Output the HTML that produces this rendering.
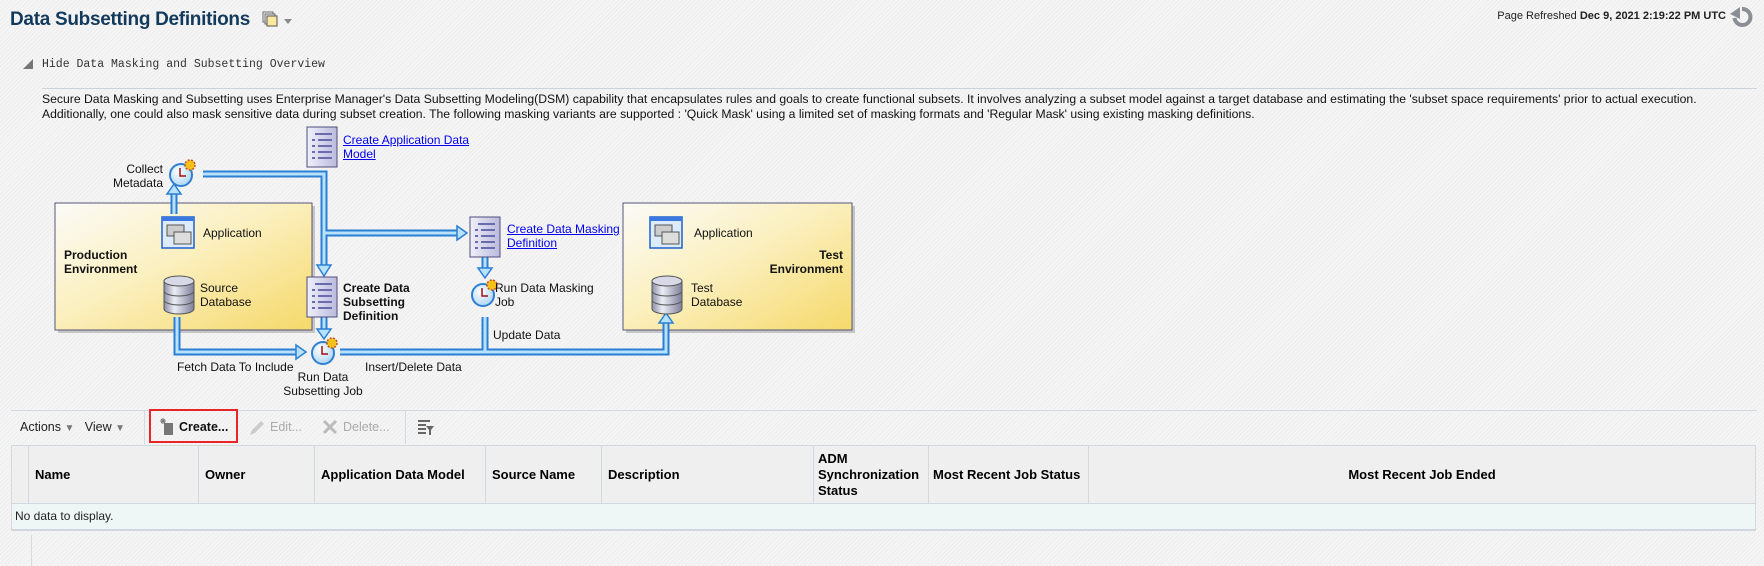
<!DOCTYPE html>
<html><head><meta charset="utf-8">
<style>
*{margin:0;padding:0;box-sizing:border-box}
html,body{width:1764px;height:566px;overflow:hidden}
body{font-family:"Liberation Sans",Arial,sans-serif;color:#000;position:relative;
background:#f3f3f3 repeating-linear-gradient(135deg,#f5f5f5 0 2px,#ededed 2px 3px);}
.a{position:absolute;white-space:nowrap}
.lbl{font-size:12px;line-height:14px;color:#111}
.lnk{color:#0000ee;text-decoration:underline}
.b{font-weight:bold}
th{font-weight:bold;font-size:13px;text-align:left;padding:0 6px;border-right:1px solid #d3d9e0;vertical-align:middle;line-height:16px}
</style></head><body>
<div class="a" style="left:10px;top:9px;font-size:19px;letter-spacing:-0.3px;font-weight:bold;color:#123a5c">Data Subsetting Definitions</div>
<svg class="a" style="left:262px;top:11px" width="34" height="18">
<rect x="1" y="1" width="10" height="10" fill="#fff" stroke="#666"/><rect x="3" y="3" width="10" height="10" fill="#eee" stroke="#666"/><rect x="5" y="5" width="10" height="10" fill="#fbe9a0" stroke="#555"/>
<polygon points="22,8 30,8 26,13" fill="#888"/></svg>
<div class="a" style="right:38px;top:10px;font-size:11px;color:#222">Page Refreshed <b>Dec 9, 2021 2:19:22 PM UTC</b></div>
<svg class="a" style="left:1729px;top:4px" width="26" height="24"><path d="M13 5 A8 8 0 1 1 5.5 14" fill="none" stroke="#8a8f96" stroke-width="4"/><polygon points="1,10 11,3 11,15" fill="#8a8f96"/></svg>

<svg class="a" style="left:22px;top:58px" width="12" height="12"><polygon points="1,11 11,1 11,11" fill="#777"/></svg>
<div class="a" style="left:42px;top:58px;font-family:'Liberation Mono',monospace;font-size:11.5px;color:#333">Hide Data Masking and Subsetting Overview</div>
<div class="a" style="left:42px;top:88px;width:1715px;height:1px;background:#ccd3db"></div>
<div class="a" style="left:42px;top:92px;font-size:12.2px;line-height:15px;color:#111">Secure Data Masking and Subsetting uses Enterprise Manager's Data Subsetting Modeling(DSM) capability that encapsulates rules and goals to create functional subsets. It involves analyzing a subset model against a target database and estimating the 'subset space requirements' prior to actual execution.<br>Additionally, one could also mask sensitive data during subset creation. The following masking variants are supported : 'Quick Mask' using a limited set of masking formats and 'Regular Mask' using existing masking definitions.</div>

<svg class="a" style="left:0;top:0" width="1764" height="410">
<defs>
<linearGradient id="env" x1="0" y1="0" x2="1" y2="1"><stop offset="0" stop-color="#fbfbf8"/><stop offset="0.45" stop-color="#fbf0c0"/><stop offset="1" stop-color="#f5d96a"/></linearGradient>
<linearGradient id="doc" x1="0" y1="0" x2="1" y2="0"><stop offset="0" stop-color="#f0f0fa"/><stop offset="1" stop-color="#b9b9dc"/></linearGradient>
<linearGradient id="db" x1="0" y1="0" x2="1" y2="0"><stop offset="0" stop-color="#8b8ea8"/><stop offset="0.35" stop-color="#eceef6"/><stop offset="1" stop-color="#7c7f98"/></linearGradient>
<radialGradient id="clk" cx="0.4" cy="0.35" r="0.7"><stop offset="0" stop-color="#fff"/><stop offset="1" stop-color="#a9d4f3"/></radialGradient>
<g id="doci"><rect x="0" y="0" width="30" height="40" fill="url(#doc)" stroke="#4d4d80"/>
<g stroke="#6b6bb0" stroke-width="2"><line x1="8" y1="7" x2="25" y2="7"/><line x1="5" y1="13" x2="8" y2="13"/><line x1="11" y1="13" x2="25" y2="13"/><line x1="5" y1="19" x2="8" y2="19"/><line x1="11" y1="19" x2="25" y2="19"/><line x1="5" y1="25" x2="8" y2="25"/><line x1="11" y1="25" x2="25" y2="25"/><line x1="5" y1="31" x2="8" y2="31"/><line x1="11" y1="31" x2="25" y2="31"/></g></g>
<g id="clock"><circle cx="0" cy="0" r="11" fill="url(#clk)" stroke="#2f7ed0" stroke-width="2"/><path d="M-1 -7 V1 H5" fill="none" stroke="#a01010" stroke-width="1.5"/>
<circle cx="9" cy="-10" r="5" fill="#f6c21a" stroke="#c0501a" stroke-width="1.5" stroke-dasharray="2 1.5"/></g>
<g id="app"><rect x="0" y="0" width="32" height="31" fill="#dcecfb" stroke="#2060d0" stroke-width="1.5"/><rect x="0" y="0" width="32" height="4" fill="#3a7ae0"/>
<rect x="5" y="8" width="17" height="11" fill="#ccc" stroke="#555"/><rect x="12" y="15" width="17" height="12" fill="#ddd" stroke="#555"/></g>
<g id="dbi"><path d="M0 5 V33 A15 5 0 0 0 30 33 V5" fill="url(#db)" stroke="#555"/><ellipse cx="15" cy="5" rx="15" ry="5" fill="#d7d9e6" stroke="#555"/>
<path d="M0 15 A15 5 0 0 0 30 15 M0 24 A15 5 0 0 0 30 24" fill="none" stroke="#555"/></g>
</defs>
<rect x="58" y="206" width="257" height="127" fill="#999" opacity="0.5"/>
<rect x="55" y="203" width="257" height="127" fill="url(#env)" stroke="#55557a"/>
<rect x="626" y="206" width="229" height="127" fill="#999" opacity="0.5"/>
<rect x="623" y="203" width="229" height="127" fill="url(#env)" stroke="#55557a"/>
<g fill="none" stroke-linejoin="miter">
<g stroke="#2a7fd4" stroke-width="7">
<path d="M203 174 H324 V265"/><path d="M324 233 H457"/><path d="M174 214 V192"/>
<path d="M324 317 V330"/><path d="M485 256 V270"/>
<path d="M177 317 V352 H298"/><path d="M340 352 H666 V322"/><path d="M485 317 V352"/></g>
<g stroke="#b8e2fb" stroke-width="3">
<path d="M203 174 H324 V265"/><path d="M324 233 H457"/><path d="M174 214 V192"/>
<path d="M324 317 V330"/><path d="M485 256 V270"/>
<path d="M177 317 V352 H298"/><path d="M340 352 H666 V322"/><path d="M485 317 V352"/></g>
</g>
<g fill="#b8e2fb" stroke="#2a7fd4" stroke-width="1.5">
<polygon points="317,265 331,265 324,276"/><polygon points="457,226 457,240 467,233"/>
<polygon points="167,194 181,194 174,184"/><polygon points="317,329 331,329 324,339"/>
<polygon points="478,268 492,268 485,278"/><polygon points="296,345 296,359 306,352"/>
<polygon points="659,323 673,323 666,313"/></g>
<use href="#doci" x="307" y="127"/><use href="#doci" x="307" y="277"/><use href="#doci" x="470" y="217"/>
<use href="#clock" x="181" y="175"/><use href="#clock" x="323" y="353"/><use href="#clock" x="483" y="295"/>
<use href="#app" x="162" y="217"/><use href="#app" x="650" y="217"/>
<use href="#dbi" x="164" y="276"/><use href="#dbi" x="652" y="276"/>
</svg>
<div class="a lbl lnk" style="left:343px;top:133px">Create Application Data<br>Model</div>
<div class="a lbl" style="left:100px;top:162px;width:63px;text-align:right">Collect<br>Metadata</div>
<div class="a lbl" style="left:203px;top:226px">Application</div>
<div class="a lbl b" style="left:64px;top:248px">Production<br>Environment</div>
<div class="a lbl" style="left:200px;top:281px">Source<br>Database</div>
<div class="a lbl b" style="left:343px;top:281px">Create Data<br>Subsetting<br>Definition</div>
<div class="a lbl" style="left:177px;top:360px">Fetch Data To Include</div>
<div class="a lbl" style="left:283px;top:370px;width:80px;text-align:center">Run Data<br>Subsetting Job</div>
<div class="a lbl" style="left:365px;top:360px">Insert/Delete Data</div>
<div class="a lbl" style="left:493px;top:328px">Update Data</div>
<div class="a lbl lnk" style="left:507px;top:222px">Create Data Masking<br>Definition</div>
<div class="a lbl" style="left:495px;top:281px">Run Data Masking<br>Job</div>
<div class="a lbl" style="left:694px;top:226px">Application</div>
<div class="a lbl b" style="left:743px;top:248px;width:100px;text-align:right">Test<br>Environment</div>
<div class="a lbl" style="left:691px;top:281px">Test<br>Database</div>

<div class="a" style="left:11px;top:410px;width:1746px;height:1px;background:#d3d9e0"></div>
<div class="a" style="left:144px;top:411px;width:1px;height:33px;background:#d3d9e0"></div>
<div class="a" style="left:405px;top:411px;width:1px;height:33px;background:#d3d9e0"></div>
<div class="a" style="left:20px;top:420px;font-size:12.5px;color:#222">Actions <span style="color:#777;font-size:10px">▼</span>&nbsp;&nbsp; View <span style="color:#777;font-size:10px">▼</span></div>
<div class="a" style="left:149px;top:409px;width:89px;height:34px;border:2px solid #e8262a"></div>
<svg class="a" style="left:160px;top:418px" width="14" height="18"><rect x="4" y="5" width="9" height="12" fill="#777"/><path d="M1 1 l4 4 M5 1 l-4 4 M3 0 v6 M0 3 h6" stroke="#777" stroke-width="1"/></svg>
<div class="a" style="left:179px;top:420px;font-size:12.5px;font-weight:bold;color:#111">Create...</div>
<svg class="a" style="left:248px;top:419px" width="18" height="18"><path d="M2 16 L4 11 L13 2 L16 5 L7 14 Z" fill="#ccc"/></svg>
<div class="a" style="left:270px;top:420px;font-size:12.5px;color:#aaa">Edit...</div>
<svg class="a" style="left:322px;top:419px" width="16" height="16"><path d="M2 2 L14 14 M14 2 L2 14" stroke="#bbb" stroke-width="3"/></svg>
<div class="a" style="left:343px;top:420px;font-size:12.5px;color:#aaa">Delete...</div>
<svg class="a" style="left:417px;top:419px" width="18" height="18"><rect x="1" y="1" width="12" height="2" fill="#666"/><rect x="1" y="5" width="8" height="2" fill="#666"/><rect x="1" y="9" width="8" height="2" fill="#666"/><rect x="1" y="13" width="8" height="2" fill="#666"/><polygon points="9,7 17,7 14,11 14,16 12,16 12,11" fill="#666"/></svg>

<table class="a" style="left:11px;top:445px;width:1745px;border-collapse:collapse;border:1px solid #d3d9e0;border-bottom:2px solid #cfd6dd">
<tr style="background:#efefef;height:58px;border-bottom:1px solid #d3d9e0">
<th style="width:17px;padding:0"></th><th style="width:170px">Name</th><th style="width:116px">Owner</th><th style="width:171px">Application Data Model</th><th style="width:116px">Source Name</th><th style="width:212px">Description</th><th style="width:115px;padding-left:4px">ADM<br>Synchronization<br>Status</th><th style="width:160px;padding-left:4px">Most Recent Job Status</th><th style="text-align:center;border-right:none">Most Recent Job Ended</th></tr>
<tr style="background:#eff7f6;height:26px"><td colspan="9" style="font-size:12px;padding-left:3px;color:#222">No data to display.</td></tr>
</table>
<div class="a" style="left:31px;top:535px;width:1px;height:31px;background:#d3d9e0"></div>
</body></html>
